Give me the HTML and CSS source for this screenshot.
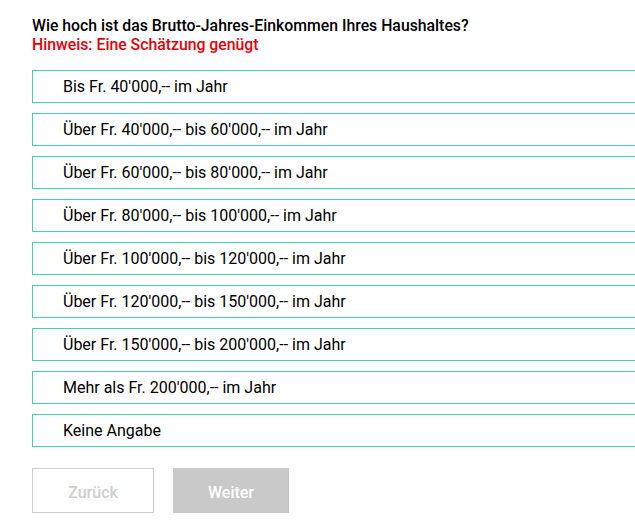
FILE: index.html
```html
<!DOCTYPE html>
<html lang="de">
<head>
    <meta charset="UTF-8">
    <meta name="viewport" content="width=device-width, initial-scale=1.0">
    <title>Umfrage</title>
    <link rel="stylesheet" href="styles.css">
</head>
<body>
    <div class="question">
        <h2 class="question-title">Wie hoch ist das Brutto-Jahres-Einkommen Ihres Haushaltes?</h2>
        <p class="question-hint">Hinweis: Eine Schätzung genügt</p>

        <ul class="answers">
            <li class="answer">Bis Fr. 40'000,-- im Jahr</li>
            <li class="answer">Über Fr. 40'000,-- bis 60'000,-- im Jahr</li>
            <li class="answer">Über Fr. 60'000,-- bis 80'000,-- im Jahr</li>
            <li class="answer">Über Fr. 80'000,-- bis 100'000,-- im Jahr</li>
            <li class="answer">Über Fr. 100'000,-- bis 120'000,-- im Jahr</li>
            <li class="answer">Über Fr. 120'000,-- bis 150'000,-- im Jahr</li>
            <li class="answer">Über Fr. 150'000,-- bis 200'000,-- im Jahr</li>
            <li class="answer">Mehr als Fr. 200'000,-- im Jahr</li>
            <li class="answer">Keine Angabe</li>
        </ul>

        <div class="nav-buttons">
            <button class="btn btn-back" disabled>Zurück</button>
            <button class="btn btn-next" disabled>Weiter</button>
        </div>
    </div>
</body>
</html>
```

FILE: styles.css
```css
/* General Reset */
* {
    margin: 0;
    padding: 0;
    box-sizing: border-box;
}

html {
    overflow-x: hidden;
}

body {
    font-family: Roboto, 'Liberation Sans', sans-serif;
    background-color: #fff;
    color: #000;
}

.question {
    padding: 16px 0 0 32px;
    width: 660px;
}

/* Header */
.question-title {
    font-size: 15.8px;
    font-weight: 500;
    line-height: 19px;
}

.question-hint {
    font-size: 15.8px;
    font-weight: 500;
    line-height: 19px;
    color: #e8000b;
}

/* Answer list */
.answers {
    list-style: none;
    display: flex;
    flex-direction: column;
    gap: 10px;
    margin-top: 16px;
}

.answer {
    height: 33px;
    border: 1px solid #3fd3bd;
    padding: 1px 0 0 30px;
    font-size: 16px;
    line-height: 29px;
    cursor: pointer;
}

/* Buttons */
.nav-buttons {
    display: flex;
    gap: 19px;
    margin-top: 21px;
}

.btn {
    height: 45px;
    padding-top: 4px;
    font-family: inherit;
    font-size: 16px;
    font-weight: 500;
}

.btn-back {
    width: 122px;
    background: #fff;
    border: 1px solid #cfcfcf;
    color: #cfcfcf;
}

.btn-next {
    width: 116px;
    background: #c9c9c9;
    border: none;
    color: #fff;
}
```
